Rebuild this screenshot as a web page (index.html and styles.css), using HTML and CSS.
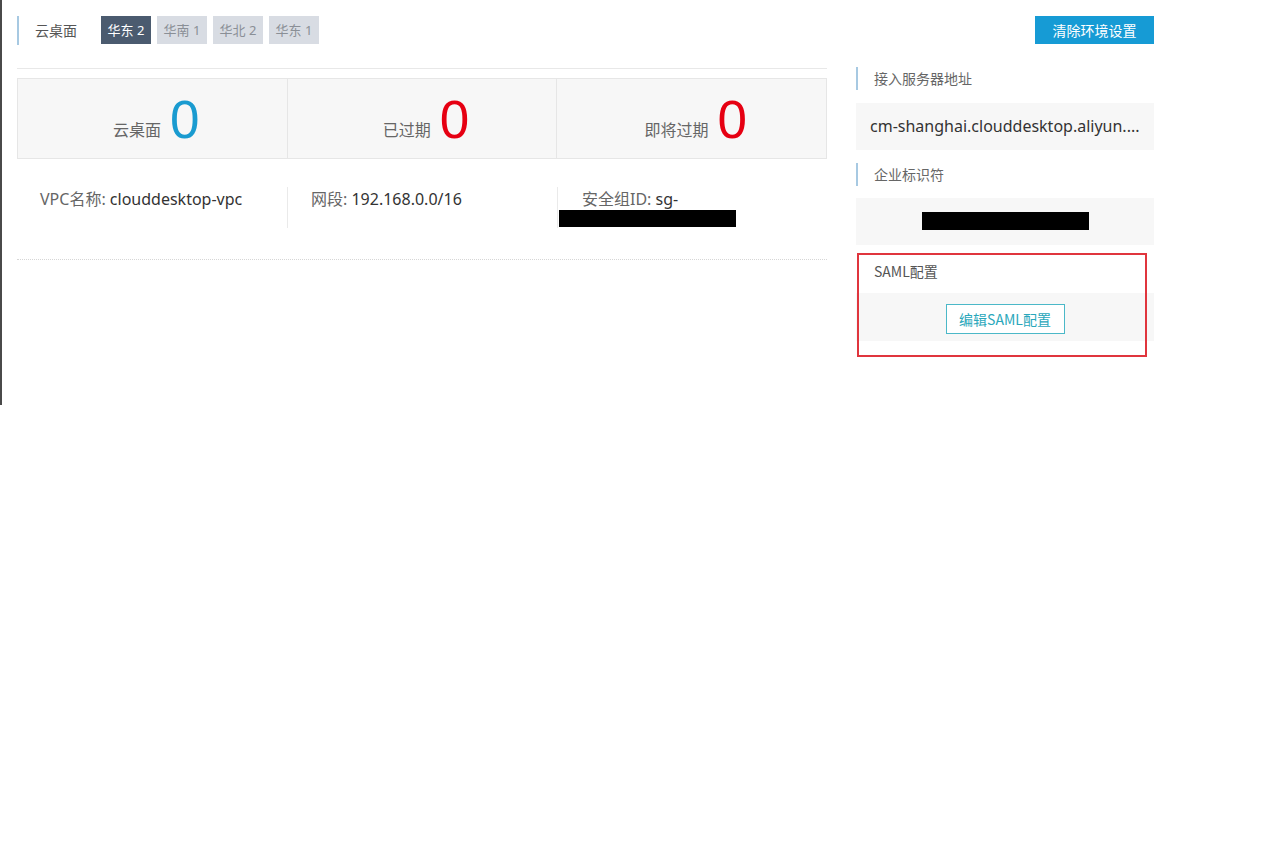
FILE: index.html
```html
<!DOCTYPE html>
<html lang="zh-CN">
<head>
<meta charset="utf-8">
<title>云桌面</title>
<link rel="stylesheet" href="styles.css">
</head>
<body>
<div class="frame">
  <div class="main">
    <div class="head">
      <div class="title">云桌面</div>
      <div class="tabs">
        <span class="tab active">华东 2</span>
        <span class="tab">华南 1</span>
        <span class="tab">华北 2</span>
        <span class="tab">华东 1</span>
      </div>
    </div>
    <div class="rule"></div>
    <div class="stats">
      <div class="stat"><span class="stat-label">云桌面</span><span class="num blue">0</span></div>
      <div class="stat"><span class="stat-label">已过期</span><span class="num red">0</span></div>
      <div class="stat"><span class="stat-label">即将过期</span><span class="num red">0</span></div>
    </div>
    <div class="info">
      <div class="cell first"><div class="line"><span class="k">VPC名称:</span> <span class="v">clouddesktop-vpc</span></div></div>
      <div class="cell"><div class="line"><span class="k">网段:</span> <span class="v">192.168.0.0/16</span></div></div>
      <div class="cell last"><div class="line"><span class="k">安全组ID:</span> <span class="v">sg-</span></div><div class="redact wide"></div></div>
    </div>
    <div class="dots"></div>
  </div>
  <div class="side">
    <button class="btn-primary">清除环境设置</button>
    <div class="label">接入服务器地址</div>
    <div class="box text">cm-shanghai.clouddesktop.aliyun....</div>
    <div class="label second">企业标识符</div>
    <div class="box center"><div class="redact id"></div></div>
    <div class="saml">
      <div class="saml-title">SAML配置</div>
      <div class="saml-body"><button class="btn-line">编辑SAML配置</button></div>
      <div class="mark"></div>
    </div>
  </div>
</div>
</body>
</html>
```
FILE: styles.css
```css
html, body {
  margin: 0;
  padding: 0;
  background: #fff;
}
body {
  font-family: "Noto Sans", "Noto Sans CJK SC", sans-serif;
  color: #333;
}
.frame {
  box-sizing: border-box;
  height: 405px;
  border-left: 2px solid #4a4a4a;
  padding: 16px 0 0 15px;
  display: flex;
  align-items: flex-start;
}
.main {
  width: 810px;
  display: flex;
  flex-direction: column;
}
.head {
  display: flex;
  align-items: center;
  height: 28px;
}
.title {
  border-left: 2px solid #a7c9e2;
  padding-left: 16px;
  height: 29px;
  line-height: 29px;
  font-size: 14px;
  color: #555;
  font-family: "Noto Sans CJK SC", sans-serif;
  margin-right: 24px;
}
.tabs {
  display: flex;
  gap: 6px;
}
.tab {
  width: 50px;
  height: 28px;
  line-height: 28px;
  text-align: center;
  font-size: 13px;
  background: #d8dce3;
  color: #8a8f96;
}
.tab.active {
  background: #4b5b6f;
  color: #fff;
}
.rule {
  margin-top: 24px;
  height: 1px;
  background: #e8e8e8;
}
.stats {
  margin-top: 9px;
  height: 81px;
  box-sizing: border-box;
  border: 1px solid #e6e6e6;
  background: #f7f7f7;
  display: flex;
}
.stat {
  flex: 1;
  display: flex;
  justify-content: center;
  align-items: baseline;
  padding-top: 14px;
  padding-left: 8px;
  border-left: 1px solid #e6e6e6;
}
.stat:first-child {
  border-left: none;
}
.stat-label {
  font-size: 16px;
  color: #666;
  margin-right: 9px;
  font-family: "Noto Sans CJK SC", sans-serif;
  position: relative;
  top: -2px;
}
.num {
  font-family: "Liberation Sans", sans-serif;
  font-size: 53px;
  line-height: 54px;
}
.blue { color: #1a9bd0; }
.red { color: #e60012; }
.info {
  margin-top: 28px;
  display: flex;
  height: 41px;
}
.cell {
  width: 270px;
  border-left: 1px solid #eaeaea;
  box-sizing: border-box;
  padding-left: 23px;
}
.cell.first {
  border-left: none;
  padding-left: 23px;
}
.cell.last {
  padding-left: 1px;
}
.cell.last .line {
  padding-left: 23px;
}
.line {
  font-size: 16px;
  line-height: 22px;
  padding-top: 1px;
  white-space: nowrap;
}
.k {
  color: #666;
}
.v {
  color: #333;
}
.redact {
  background: #000;
}
.redact.wide {
  width: 177px;
  height: 17px;
}
.dots {
  margin-top: 31px;
  border-top: 1px dotted #d6d6d6;
}
.side {
  width: 298px;
  margin-left: 29px;
  display: flex;
  flex-direction: column;
}
.btn-primary {
  align-self: flex-end;
  width: 119px;
  height: 28px;
  border: none;
  background: #169bd5;
  color: #fff;
  font-size: 14px;
  font-family: "Noto Sans CJK SC", sans-serif;
  padding: 0;
}
.label {
  margin-top: 23px;
  height: 23px;
  line-height: 23px;
  border-left: 2px solid #a7c9e2;
  padding-left: 16px;
  font-size: 14px;
  color: #666;
  font-family: "Noto Sans CJK SC", sans-serif;
}
.label.second {
  margin-top: 13px;
}
.box {
  margin-top: 13px;
  height: 47px;
  background: #f7f7f7;
  box-sizing: border-box;
}
.box.text {
  padding-left: 14px;
  line-height: 47px;
  font-size: 16px;
  color: #333;
  white-space: nowrap;
}
.box.center {
  margin-top: 12px;
  display: flex;
  justify-content: center;
  padding-top: 14px;
}
.redact.id {
  width: 167px;
  height: 18px;
}
.saml {
  position: relative;
  margin-top: 8px;
  padding-bottom: 26px;
}
.saml-title {
  height: 40px;
  line-height: 36px;
  padding-left: 18px;
  font-size: 14px;
  color: #555;
  font-family: "Noto Sans CJK SC", sans-serif;
}
.saml-body {
  height: 48px;
  box-sizing: border-box;
  background: #f7f7f7;
  display: flex;
  justify-content: center;
  padding-top: 11px;
}
.btn-line {
  width: 119px;
  height: 30px;
  border: 1px solid #4bb8c8;
  background: #fff;
  color: #2aa7bb;
  font-size: 14px;
  font-family: "Noto Sans CJK SC", sans-serif;
  padding: 0;
}
.mark {
  position: absolute;
  left: 1px;
  top: 0;
  width: 290px;
  height: 104px;
  box-sizing: border-box;
  border: 2px solid #e0353d;
  pointer-events: none;
}
```
